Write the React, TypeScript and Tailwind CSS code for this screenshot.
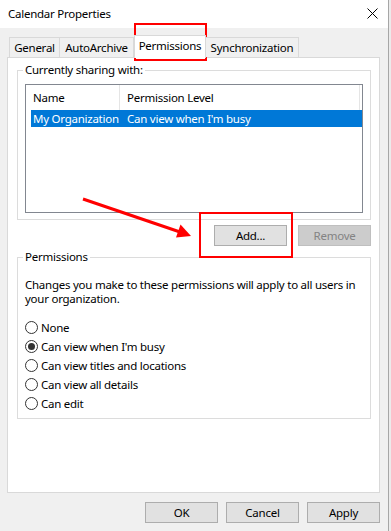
const tabs = [
  { label: 'General', w: 'w-[51px]' },
  { label: 'AutoArchive', w: 'w-[75px]' },
]

const levels = [
  'None',
  "Can view when I'm busy",
  'Can view titles and locations',
  'Can view all details',
  'Can edit',
]

function Radio({ checked }: { checked?: boolean }) {
  return (
    <span className="flex h-[13px] w-[13px] items-center justify-center rounded-full border border-[#333333] bg-white">
      {checked && <span className="h-[7px] w-[7px] rounded-full bg-[#333333]" />}
    </span>
  )
}

function Button({ children, disabled }: { children: React.ReactNode; disabled?: boolean }) {
  return (
    <button
      className={
        disabled
          ? 'flex h-[21px] w-[73px] items-center justify-center border border-[#bfbfbf] bg-[#cccccc] text-[#838383]'
          : 'flex h-[21px] w-[73px] items-center justify-center border border-[#adadad] bg-[#e1e1e1] text-black'
      }
    >
      {children}
    </button>
  )
}

export default function App() {
  return (
    <div className="relative flex h-[531px] w-[391px] overflow-hidden bg-[#f0f0f0] font-['Segoe_UI','Noto_Sans',sans-serif] text-[11.5px] leading-[16px] tracking-[-0.25px] text-black">
      <div className="flex w-[388px] flex-col">
        {/* Title bar */}
        <div className="flex h-[28px] items-center justify-between bg-white pl-[8px] pr-[10px]">
          <span className="mt-[-1px] text-[11.5px]">Calendar Properties</span>
          <svg width="11" height="11" viewBox="0 0 11 11" className="mt-[-2px]">
            <path d="M0.5 0.5 L10.5 10.5 M10.5 0.5 L0.5 10.5" stroke="#000" strokeWidth="1" />
          </svg>
        </div>

        <div className="flex flex-1 flex-col pl-[7px] pr-[8px] pt-[7px]">
          {/* Tabs */}
          <div className="relative z-10 flex h-[22px] items-end pl-[2px]">
            {tabs.map((t, i) => (
              <div
                key={t.label}
                className={`flex h-[20px] ${t.w} items-center justify-center border border-b-0 border-[#d9d9d9] bg-[#f0f0f0] ${i > 0 ? '-ml-px' : ''}`}
              >
                {t.label}
              </div>
            ))}
            <div className="-mb-px flex h-[23px] w-[72px] items-start justify-center border border-b-0 border-[#d9d9d9] bg-white pt-[2px]">
              Permissions
            </div>
            <div className="flex h-[20px] w-[93px] items-center justify-center border border-b-0 border-l-0 border-[#d9d9d9] bg-[#f0f0f0]">
              Synchronization
            </div>
          </div>

          {/* Tab page */}
          <div className="flex h-[436px] flex-col border border-[#d9d9d9] bg-white pl-[9px] pr-[8px] pt-[4px]">
            <fieldset className="border border-[#dcdcdc] px-[7px] pb-[6px]">
              <legend className="-ml-[2px] px-[2px]">Currently sharing with:</legend>
              <div className="mt-[6px] flex h-[129px] flex-col border border-[#828790] pl-[5px]">
                <div className="flex h-[25px] items-center">
                  <div className="flex h-full w-[89px] items-center border-r border-[#e5e5e5] pl-[2px]">Name</div>
                  <div className="flex h-full w-[240px] items-center border-r border-[#e5e5e5] pl-[7px]">Permission Level</div>
                </div>
                <div className="flex h-[17px] items-center bg-[#0078d7] text-white">
                  <div className="w-[89px] whitespace-nowrap pl-[2px]">My Organization</div>
                  <div className="pl-[7px]">Can view when I'm busy</div>
                </div>
              </div>
            </fieldset>

            <div className="mt-[5px] flex justify-end gap-[11px]">
              <Button>Add...</Button>
              <Button disabled>Remove</Button>
            </div>

            <fieldset className="mt-[3px] border border-[#dcdcdc] px-[7px] pb-[5px]">
              <legend className="-ml-[2px] px-[2px]">Permissions</legend>
              <p className="mt-[13px] whitespace-nowrap leading-[14px]">
                Changes you make to these permissions will apply to all users in
                <br />
                your organization.
              </p>
              <div className="mt-[12px] flex flex-col">
                {levels.map((l, i) => (
                  <label key={l} className="flex h-[19px] items-center gap-[3px]">
                    <Radio checked={i === 1} />
                    <span>{l}</span>
                  </label>
                ))}
              </div>
            </fieldset>
          </div>

          {/* Dialog buttons */}
          <div className="mt-[9px] flex justify-end gap-[8px]">
            <Button>OK</Button>
            <Button>Cancel</Button>
            <Button>Apply</Button>
          </div>
        </div>
      </div>

      {/* Window edge */}
      <div className="w-[3px] border-l border-[#a6a6a6] bg-[#ebebeb]" />

      {/* Annotations */}
      <div className="pointer-events-none absolute left-[134px] top-[23px] h-[38px] w-[73px] border-2 border-[#ff0000]" />
      <div className="pointer-events-none absolute left-[199px] top-[212px] h-[46px] w-[94px] border-2 border-[#ff0000]" />
      <svg className="pointer-events-none absolute left-0 top-0" width="391" height="531">
        <line x1="83" y1="199" x2="180" y2="232" stroke="#ff0000" strokeWidth="3" />
        <polygon points="191,236 176,237.5 180.5,224.5" fill="#ff0000" />
      </svg>
    </div>
  )
}
